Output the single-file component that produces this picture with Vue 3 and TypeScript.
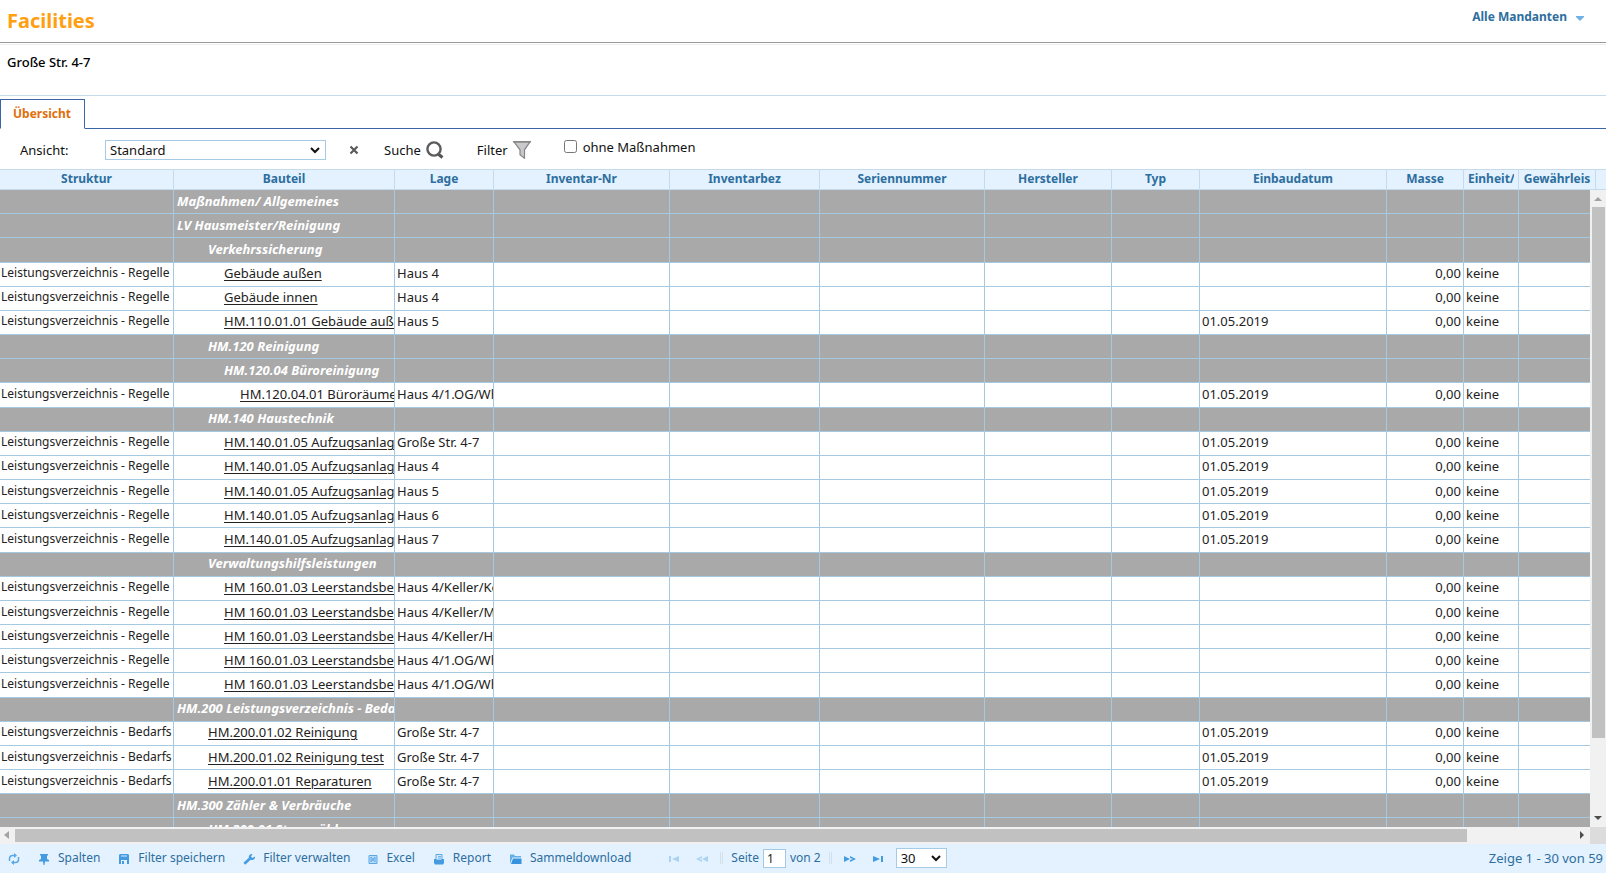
<script setup lang="ts">
import { ref } from 'vue'

interface Column { label: string; width: number }
interface Row {
  group?: boolean
  level: number
  name: string
  struktur?: string
  lage?: string
  datum?: string
}

const columns: Column[] = [
  { label: 'Struktur', width: 174 },
  { label: 'Bauteil', width: 221 },
  { label: 'Lage', width: 99 },
  { label: 'Inventar-Nr', width: 176 },
  { label: 'Inventarbez', width: 150 },
  { label: 'Seriennummer', width: 165 },
  { label: 'Hersteller', width: 127 },
  { label: 'Typ', width: 88 },
  { label: 'Einbaudatum', width: 187 },
  { label: 'Masse', width: 77 },
  { label: 'Einheit/', width: 55 },
  { label: 'Gewährleis', width: 77 },
]

const group = (level: number, name: string): Row => ({ group: true, level, name })
const regel = (level: number, name: string, lage: string, datum = ''): Row =>
  ({ level, name, lage, datum, struktur: 'Leistungsverzeichnis - Regelle' })
const bedarf = (level: number, name: string, lage: string, datum = ''): Row =>
  ({ level, name, lage, datum, struktur: 'Leistungsverzeichnis - Bedarfs' })

const day = '01.05.2019'
const rows: Row[] = [
  group(0, 'Maßnahmen/ Allgemeines'),
  group(0, 'LV Hausmeister/Reinigung'),
  group(2, 'Verkehrssicherung'),
  regel(3, 'Gebäude außen', 'Haus 4'),
  regel(3, 'Gebäude innen', 'Haus 4'),
  regel(3, 'HM.110.01.01 Gebäude auße', 'Haus 5', day),
  group(2, 'HM.120 Reinigung'),
  group(3, 'HM.120.04 Büroreinigung'),
  regel(4, 'HM.120.04.01 Büroräume', 'Haus 4/1.OG/Wh', day),
  group(2, 'HM.140 Haustechnik'),
  regel(3, 'HM.140.01.05 Aufzugsanlag', 'Große Str. 4-7', day),
  regel(3, 'HM.140.01.05 Aufzugsanlag', 'Haus 4', day),
  regel(3, 'HM.140.01.05 Aufzugsanlag', 'Haus 5', day),
  regel(3, 'HM.140.01.05 Aufzugsanlag', 'Haus 6', day),
  regel(3, 'HM.140.01.05 Aufzugsanlag', 'Haus 7', day),
  group(2, 'Verwaltungshilfsleistungen'),
  regel(3, 'HM 160.01.03 Leerstandsbeg', 'Haus 4/Keller/Ke'),
  regel(3, 'HM 160.01.03 Leerstandsbeg', 'Haus 4/Keller/M'),
  regel(3, 'HM 160.01.03 Leerstandsbeg', 'Haus 4/Keller/H'),
  regel(3, 'HM 160.01.03 Leerstandsbeg', 'Haus 4/1.OG/Wh'),
  regel(3, 'HM 160.01.03 Leerstandsbeg', 'Haus 4/1.OG/Wh'),
  group(0, 'HM.200 Leistungsverzeichnis - Beda'),
  bedarf(2, 'HM.200.01.02 Reinigung', 'Große Str. 4-7', day),
  bedarf(2, 'HM.200.01.02 Reinigung test', 'Große Str. 4-7', day),
  bedarf(2, 'HM.200.01.01 Reparaturen', 'Große Str. 4-7', day),
  group(0, 'HM.300 Zähler & Verbräuche'),
  group(2, 'HM.300.01 Stromzähler'),
]

const view = ref('Standard')
const withoutMeasures = ref(false)
const page = ref('1')
const pageSize = ref('30')
</script>

<template>
  <div class="app">
    <header class="top">
      <h1>Facilities</h1>
      <button class="tenant" type="button">
        Alle Mandanten
        <svg width="8" height="5" viewBox="0 0 8 5"><path d="M0 0h8v1L4 5 0 1z" fill="#6fb1e4" /></svg>
      </button>
    </header>

    <div class="object">Große Str. 4-7</div>

    <nav class="tabs">
      <a class="tab" href="#uebersicht">Übersicht</a>
    </nav>

    <div class="toolbar">
      <label class="view-label" for="view">Ansicht:</label>
      <div class="select view-select">
        <select id="view" v-model="view"><option>Standard</option></select>
        <svg width="10" height="7" viewBox="0 0 10 7"><path d="M1 1l4 4 4-4" fill="none" stroke="#111" stroke-width="2" /></svg>
      </div>
      <button class="clear" type="button" aria-label="Ansicht löschen">
        <svg width="10" height="10" viewBox="0 0 10 10"><path d="M1.500 1.500l7 7M8.500 1.500l-7 7" stroke="#5a5a5a" stroke-width="2.200" /></svg>
      </button>
      <button class="search" type="button">
        Suche
        <svg width="18" height="18" viewBox="0 0 18 18"><path d="M11.500 12.500l5 4" stroke="#555" stroke-width="3.200" /><circle cx="8" cy="8" r="6.600" fill="#fff" stroke="#5c5c5c" stroke-width="2.400" /></svg>
      </button>
      <button class="filter" type="button">
        Filter
        <svg width="18" height="18" viewBox="0 0 18 18"><path d="M1 .8h16l-5.500 8v8.400L7 13.800v-5z" fill="#c9c9cd" stroke="#858585" stroke-width="1.200" /><path d="M0 .7h18" stroke="#858585" stroke-width="1.400" /></svg>
      </button>
      <label class="check"><input v-model="withoutMeasures" type="checkbox">ohne Maßnahmen</label>
    </div>

    <main class="grid">
      <div class="grid-head">
        <table>
          <colgroup><col v-for="c in columns" :key="c.label" :style="{ width: c.width + 'px' }"></colgroup>
          <thead>
            <tr><th v-for="c in columns" :key="c.label" scope="col"><div>{{ c.label }}</div></th></tr>
          </thead>
        </table>
      </div>
      <div class="grid-body">
        <div class="viewport">
          <table class="rows">
            <colgroup><col v-for="c in columns" :key="c.label" :style="{ width: c.width + 'px' }"></colgroup>
            <tbody>
              <tr v-for="(r, i) in rows" :key="i" :class="{ group: r.group }">
                <td class="struktur">{{ r.struktur }}</td>
                <td :class="'level-' + r.level">
                  <template v-if="r.group">{{ r.name }}</template>
                  <a v-else href="#bauteil">{{ r.name }}</a>
                </td>
                <td>{{ r.lage }}</td>
                <td></td><td></td><td></td><td></td><td></td>
                <td>{{ r.datum }}</td>
                <td class="num">{{ r.group ? '' : '0,00' }}</td>
                <td>{{ r.group ? '' : 'keine' }}</td>
                <td></td>
              </tr>
            </tbody>
          </table>
        </div>
        <div class="vbar">
          <svg width="16" height="17" viewBox="0 0 16 17"><path d="M4 11h8L8 7z" fill="#a3a3a3" /></svg>
          <div class="vtrack"><div class="vthumb"></div></div>
          <svg width="16" height="17" viewBox="0 0 16 17"><path d="M4 6h8L8 10z" fill="#4d4d4d" /></svg>
        </div>
      </div>
      <div class="hbar">
        <svg width="15" height="17" viewBox="0 0 15 17"><path d="M9 4v8L4 8z" fill="#a3a3a3" /></svg>
        <div class="htrack"><div class="hthumb"></div></div>
        <svg width="14" height="17" viewBox="0 0 14 17"><path d="M4 4v8l4-4z" fill="#4d4d4d" /></svg>
        <div class="corner"></div>
      </div>
    </main>

    <footer class="pager">
      <div class="actions">
        <button type="button" aria-label="Neu laden">
          <svg width="12" height="12" viewBox="0 0 12 12" fill="none" stroke="#5aa9e6" stroke-width="1.500"><path d="M1.500 8V5.500a3 3 0 0 1 3-3H8M10.500 4v2.500a3 3 0 0 1-3 3H4" /><path d="M6 0l3 2.500L6 5zM6 7L3 9.500 6 12z" fill="#5aa9e6" stroke="none" /></svg>
        </button>
        <button type="button">
          <svg width="12" height="12" viewBox="0 0 12 12" fill="#459be0"><path d="M2 1h8v1.500H9V6l2 1v1.500H7L6.500 12h-1L5 8.500H1V7l2-1V2.500H2z" /></svg>
          Spalten
        </button>
        <button type="button">
          <svg width="12" height="12" viewBox="0 0 12 12"><path d="M2 1h8l1 1v9H1V2z" fill="#459be0" /><path d="M3 2h6v2H3z" fill="#8cc3ef" /><path d="M3 7h6v4H3z" fill="#e3f2fe" /><path d="M4 8h2v3H4z" fill="#459be0" /></svg>
          Filter speichern
        </button>
        <button type="button">
          <svg width="12" height="12" viewBox="0 0 12 12"><path d="M1.300 10.700L7 5.500" stroke="#459be0" stroke-width="2.600" /><path d="M9.500 1A3 3 0 0 0 6 5l1.500 1.800A3.200 3.200 0 0 0 12 3.500L9.500 5 8 3.500z" fill="#459be0" /></svg>
          Filter verwalten
        </button>
        <button type="button">
          <svg width="10" height="12" viewBox="0 0 10 12"><path d="M1 2.500h8v8H1z" fill="#b8dcf7" stroke="#5aa9e6" /><path d="M3.500 4.500l3 4M6.500 4.500l-3 4M3 4v5M7 4v5" stroke="#5aa9e6" /></svg>
          Excel
        </button>
        <button type="button">
          <svg width="12" height="12" viewBox="0 0 12 12"><path d="M3 1.500h6V7H3z" fill="#d6ebfb" stroke="#5aa9e6" /><path d="M5 3.500h3M5 5h3" stroke="#5aa9e6" stroke-width=".8" /><path d="M1 6h2v1h6V6h2v4l-1 1.500H2L1 10z" fill="#459be0" /></svg>
          Report
        </button>
        <button type="button">
          <svg width="13" height="12" viewBox="0 0 13 12"><path d="M1 11V1.500h4L6 3h6v1.500H3.500z" fill="#62b0ea" /><path d="M4 5.500h8.500V11H2z" fill="#3793de" /></svg>
          Sammeldownload
        </button>
      </div>

      <div class="paging">
        <button type="button" disabled aria-label="Erste Seite">
          <svg width="12" height="8" viewBox="0 0 12 8" fill="#a9d2f3"><path d="M1 1h2v6H1zM11 1v6L4 4z" /></svg>
        </button>
        <button type="button" disabled aria-label="Vorige Seite">
          <svg width="12" height="8" viewBox="0 0 12 8" fill="#a9d2f3"><path d="M6 1v2L3 4l3 1v2L0 4zM12 1v6L6 4z" /></svg>
        </button>
        <span class="sep"></span>
        <label class="page">Seite <input v-model="page" type="text"> von 2</label>
        <span class="sep"></span>
        <button type="button" aria-label="Nächste Seite">
          <svg width="12" height="8" viewBox="0 0 12 8" fill="#459be0"><path d="M0 1v6l6-3zM6 1v2l3 1-3 1v2l6-3z" /></svg>
        </button>
        <button type="button" aria-label="Letzte Seite">
          <svg width="12" height="8" viewBox="0 0 12 8" fill="#459be0"><path d="M1 1v6l7-3zM9 1h2v6H9z" /></svg>
        </button>
        <div class="select size-select">
          <select v-model="pageSize" aria-label="Zeilen pro Seite"><option>30</option></select>
          <svg width="10" height="7" viewBox="0 0 10 7"><path d="M1 1l4 4 4-4" fill="none" stroke="#111" stroke-width="2" /></svg>
        </div>
      </div>

      <div class="count">Zeige 1 - 30 von 59</div>
    </footer>
  </div>
</template>

<style>
body { margin: 0; background: #fff; }
</style>

<style scoped>
.app {
  display: flex;
  flex-direction: column;
  height: 100vh;
  overflow: hidden;
  color: #222;
  font: 12px/16px "Noto Sans", "Open Sans", sans-serif;
}
.app * { box-sizing: border-box; }
svg { display: block; flex: none; }
button, select, input { font: inherit; color: inherit; }
button {
  display: flex;
  align-items: center;
  padding: 0;
  border: 0;
  background: none;
}

.top {
  display: flex;
  justify-content: space-between;
  align-items: flex-start;
  height: 43px;
  padding: 8px 22px 0 7px;
  border-bottom: 1px solid #999;
}
h1 {
  margin: 0;
  color: #ffa012;
  font-size: 20px;
  line-height: 26px;
}
.tenant { gap: 9px; color: #2e6e9e; font-weight: 700; line-height: 18px; }
.tenant svg { margin-top: 3px; }

.object {
  height: 52px;
  margin-top: 1px;
  padding: 9px 7px;
  border-top: 1px solid #eee;
  border-bottom: 1px solid #c5dbec;
  color: #000;
  font-size: 13px;
  font-weight: 500;
}

.tabs {
  display: flex;
  height: 33px;
  padding-top: 3px;
  border-bottom: 1px solid #3a66a7;
}
.tab {
  height: 30px;
  padding: 6px 13px 6px 12px;
  border: 1px solid #3a66a7;
  border-bottom-color: #fff;
  background: #fff;
  color: #e17009;
  font-weight: 700;
  text-decoration: none;
}

.toolbar {
  display: flex;
  align-items: center;
  height: 40px;
  padding: 1px 20px 0;
  color: #111;
  font-size: 13px;
}
.view-label { width: 85px; }
.select { position: relative; }
.select select {
  appearance: none;
  width: 100%;
  height: 20px;
  padding: 0 4px;
  border: 1px solid #a6cbe6;
  border-radius: 0;
  background: #fff;
}
.select svg { position: absolute; right: 6px; top: 7px; pointer-events: none; }
.view-select { width: 221px; }
.clear { margin-left: 23px; }
.search, .filter { gap: 5px; }
.search { margin-left: 25px; }
.filter { margin-left: 33px; }
.check {
  display: flex;
  align-items: center;
  gap: 6px;
  margin: 0 0 6px 33px;
}
.check input { width: 13px; height: 13px; margin: 0; }

.grid {
  display: flex;
  flex: 1;
  flex-direction: column;
  min-height: 0;
}
table { width: 1596px; border-collapse: separate; border-spacing: 0; table-layout: fixed; }
.grid-head {
  flex: none;
  overflow: hidden;
  background: #e3f2fe;
  border-top: 1px solid #c5dbec;
  border-bottom: 1px solid #c5dbec;
}
th {
  height: 19px;
  padding: 0 4px 2px;
  border-right: 1px solid #c5dbec;
  color: #2e6e9e;
  line-height: 16px;
}
th div { overflow: hidden; white-space: nowrap; }
.grid-body { display: flex; flex: 1; min-height: 0; }
.viewport { flex: 1; min-width: 0; overflow: hidden; }
.rows { height: 653px; }
td {
  height: 24px;
  overflow: hidden;
  padding: 0 2px 2px;
  border-right: 1px solid #a6c9e2;
  border-bottom: 1px solid #a6c9e2;
  font-size: 13px;
  text-overflow: clip;
  white-space: nowrap;
}
td a { color: inherit; text-underline-offset: 2px; }
.struktur { padding: 0 0 2px 1px; font-size: 12px; }
.num { text-align: right; }
.level-0 { padding-left: 3px; }
.level-2 { padding-left: 34px; }
.level-3 { padding-left: 50px; }
.level-4 { padding-left: 66px; }
.group td {
  background: #a9a9a9;
  color: #fff;
  font-style: italic;
  font-weight: 700;
}

.vbar {
  display: flex;
  flex: none;
  flex-direction: column;
  width: 16px;
  background: #f1f1f1;
}
.vtrack { flex: 1; padding: 0 1px 0 2px; }
.vthumb { height: 88%; background: #c1c1c1; }
.hbar {
  display: flex;
  flex: none;
  height: 17px;
  background: #f1f1f1;
}
.htrack { flex: 1; padding: 2px 0; }
.hthumb { width: 93%; height: 13px; background: #c1c1c1; }
.corner { width: 16px; background: #dcdcdc; }

.pager {
  display: flex;
  flex: none;
  align-items: center;
  height: 29px;
  padding-bottom: 1px;
  background: #e3f2fe;
  color: #2e6e9e;
}
.actions { display: flex; gap: 18px; padding-left: 8px; }
.actions button { gap: 8px; }
.actions svg, .paging button svg { margin-top: 2px; }
.paging { display: flex; align-items: center; gap: 8px; margin-left: 33px; }
.paging button { padding: 0 4px; }
.sep { width: 3px; height: 12px; border: solid #d3dfe9; border-width: 0 1px; }
.page { display: flex; align-items: center; gap: 4px; }
.page input {
  width: 23px;
  height: 19px;
  padding: 0 3px;
  border: 1px solid #a6c9e2;
  background: #fff;
  color: #222;
}
.size-select { width: 51px; color: #111; font-size: 13px; }
.count { margin-left: auto; padding-right: 3px; font-size: 13px; }
</style>
